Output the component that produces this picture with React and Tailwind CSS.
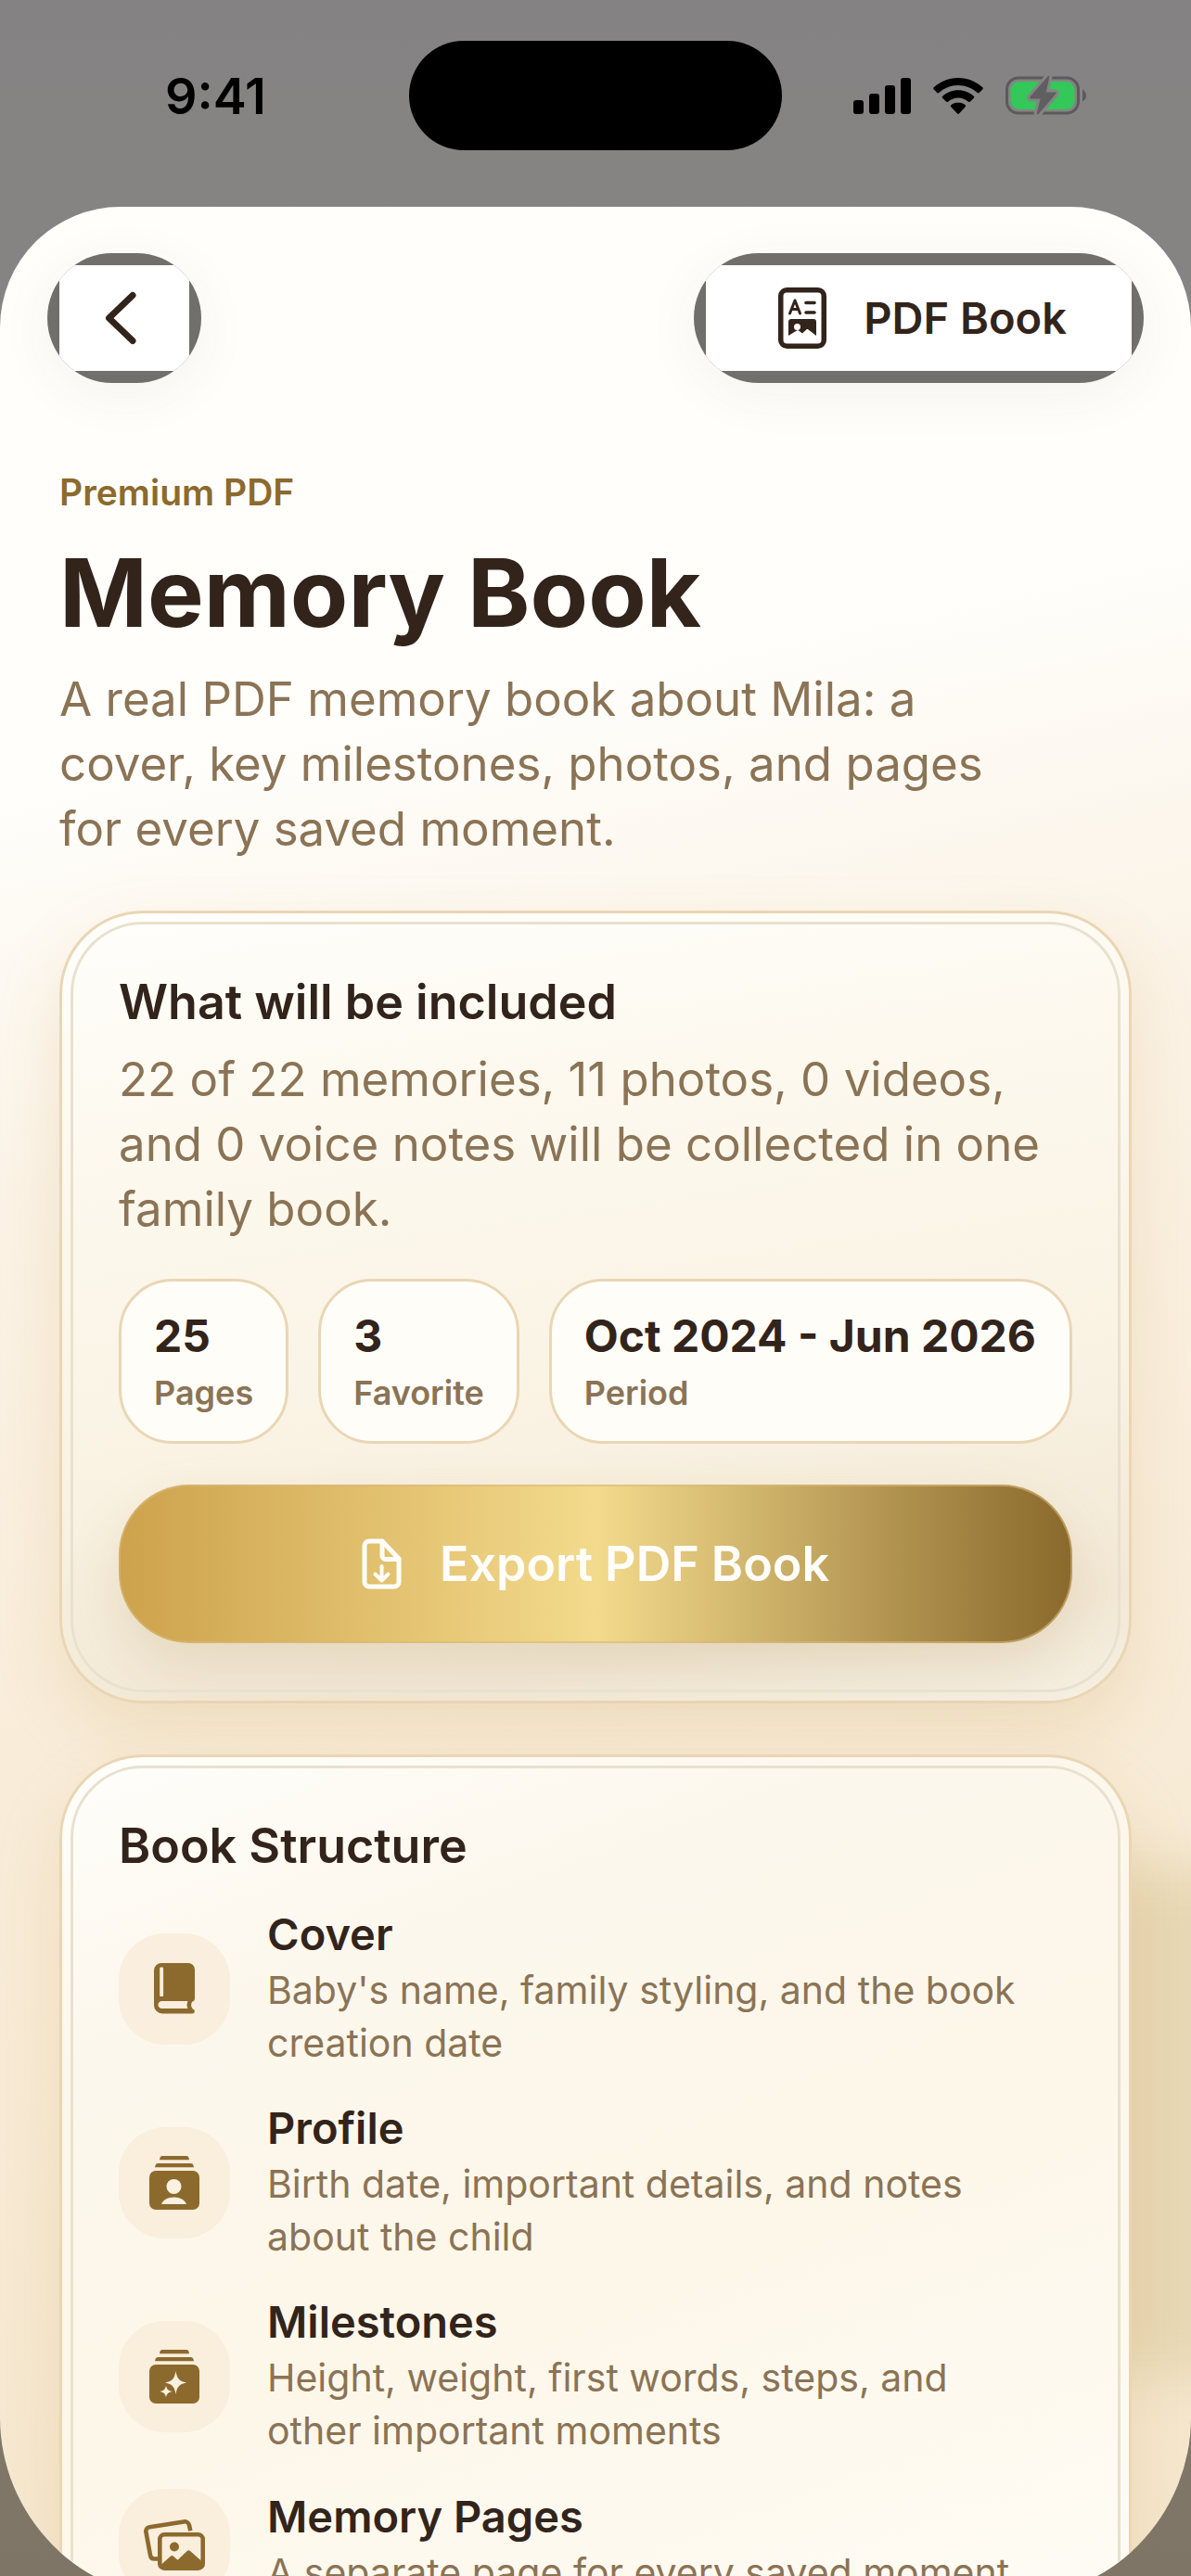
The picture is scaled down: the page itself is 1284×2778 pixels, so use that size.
import React from 'react';

const SignalIcon = () => (
  <svg width="62" height="39" viewBox="0 0 62 39" aria-hidden="true">
    <rect x="0" y="24" width="11" height="15" rx="3" />
    <rect x="17" y="17" width="11" height="22" rx="3" />
    <rect x="34" y="8" width="11" height="31" rx="3" />
    <rect x="51" y="0" width="11" height="39" rx="3" />
  </svg>
);

const WifiIcon = () => (
  <svg width="54" height="39" viewBox="0 0 54 39" aria-hidden="true">
    <path d="M27 0C16.800 0 7.600 3.900 .7 10.200c-.7.700-.7 1.400-.1 2l3.700 3.800c.6.600 1.400.6 2 0C11.800 11 19 7.900 27 7.900S42.200 11 47.700 16c.6.600 1.400.6 2 0l3.700-3.800c.6-.6.600-1.300-.1-2C46.400 3.900 37.200 0 27 0z" />
    <path d="M27 13.200c-6.500 0-12.400 2.500-16.800 6.500-.7.600-.7 1.400-.1 2l3.900 3.900c.6.600 1.300.6 2 .1 2.900-2.700 6.800-4.300 11-4.300s8.100 1.600 11 4.300c.7.500 1.400.5 2-.1l3.900-3.900c.6-.6.600-1.400-.1-2-4.400-4-10.300-6.500-16.800-6.500z" />
    <path d="M27 26.500c-2.900 0-5.500 1-7.600 2.700-.7.600-.7 1.400-.1 2l6.500 7.100c.7.800 1.700.8 2.400 0l6.500-7.100c.6-.6.600-1.400-.1-2-2.100-1.700-4.700-2.700-7.600-2.700z" />
  </svg>
);

const BatteryIcon = () => (
  <svg width="88" height="42" viewBox="0 0 88 42" aria-hidden="true">
    <rect x="1.500" y="2" width="77" height="38" rx="12.500" fill="none" stroke="#5b5a5c" strokeWidth="3" />
    <path d="M83 14.500c2.600 1.200 4 3.700 4 6.500s-1.400 5.300-4 6.500z" fill="#5b5a5c" />
    <rect x="5.500" y="6" width="69" height="30" rx="9" fill="#34c759" />
    <path
      d="M45.500 .5L26.500 22.500c-.8 1-.4 1.900.8 1.900h10.300l-3.900 15.600c-.4 1.700.8 2.200 1.900 1L54.200 19.300c.8-1 .4-1.900-.8-1.900H43.700L47.300 1.500c.4-1.700-.7-2.200-1.800-1z"
      fill="#5f5e60"
      stroke="#868482"
      strokeWidth="6"
      paintOrder="stroke"
    />
  </svg>
);

const ChevronIcon = () => (
  <svg width="34" height="58" viewBox="0 0 34 58" fill="none" stroke="#32241b" strokeWidth="7" strokeLinecap="round" strokeLinejoin="round" aria-hidden="true">
    <path d="M30 4.500L4.500 29 30 53.500" />
  </svg>
);

const DocImageIcon = () => (
  <svg width="52" height="66" viewBox="0 0 52 66" fill="none" stroke="#32241b" aria-hidden="true">
    <rect x="2.750" y="2.750" width="46.500" height="60.500" rx="6.500" strokeWidth="5.500" />
    <path d="M12.500 28l5.500-14 5.500 14M14.500 23.500h7" strokeWidth="3" strokeLinecap="round" strokeLinejoin="round" />
    <path d="M30 16.500h9M30 27h9" strokeWidth="3.600" strokeLinecap="round" />
    <path
      d="M14 34h24a3 3 0 0 1 3 3v15l-8.500-6.500c-.8-.6-1.500-.6-2.200 0L26 49.500l-4-3c-.7-.5-1.300-.5-2 0L11 52V37a3 3 0 0 1 3-3zm6.500 5a3.500 3.500 0 1 0 0 7 3.500 3.500 0 0 0 0-7z"
      fill="#32241b"
      fillRule="evenodd"
      stroke="none"
    />
  </svg>
);

const DocDownIcon = () => (
  <svg width="44" height="56" viewBox="0 0 44 56" fill="none" stroke="#fffefa" strokeWidth="5" strokeLinecap="round" strokeLinejoin="round" aria-hidden="true">
    <path d="M22 3H8a5 5 0 0 0-5 5v39a5 5 0 0 0 5 5h27a5 5 0 0 0 5-5V22z" />
    <path d="M22 3v16a3.500 3.500 0 0 0 3.500 3.500H40" />
    <path d="M21.500 30v14M14.500 38.500l7 7 7-7" strokeWidth="4" />
  </svg>
);

const BookIcon = () => (
  <svg width="44" height="55" viewBox="0 0 44 55" fill="#8c6a2d" aria-hidden="true">
    <path
      fillRule="evenodd"
      d="M8 0h29a7 7 0 0 1 7 7v31c0 2-1 3.200-2.600 3.600-1.800 2.200-1.800 5.600.4 8 1.400.4 2 1.200 2 2.400 0 1.600-1 2.500-2.800 2.500H9a9 9 0 0 1-9-9V8a8 8 0 0 1 8-8zm-.5 4.500a1.300 1.300 0 0 0-1.300 1.300v29c0 .8.600 1.300 1.300 1.300h1.300c.8 0 1.300-.5 1.300-1.300v-29c0-.8-.5-1.300-1.300-1.300zM8.500 41c-2.300 0-4 1.700-4 4s1.700 4 4 4h28c-1.300-2.400-1.300-5.600 0-8z"
    />
  </svg>
);

// stacked cards shared by the profile and milestones rows
const StackIcon = ({ children }) => (
  <svg width="54" height="58" viewBox="0 0 54 58" fill="#8c6a2d" aria-hidden="true">
    <path d="M14 0h26c1.700 0 2.800 1.500 3 4.300H11C11.200 1.500 12.300 0 14 0z" />
    <path d="M9.500 8h35c2 0 3.200 1.500 3.500 4.300H6C6.300 9.500 7.500 8 9.500 8z" />
    <rect x="0" y="16" width="54" height="42" rx="7" />
    {children}
  </svg>
);

const ProfileIcon = () => (
  <StackIcon>
    <g fill="#fbf1e0">
      <circle cx="26.500" cy="33" r="8" />
      <path d="M13 52c1.500-4.500 7-7.500 13.500-7.500S38.500 47.500 40 52z" />
    </g>
  </StackIcon>
);

const MilestoneIcon = () => (
  <StackIcon>
    <g fill="#fbf1e0">
      <path d="M28.500 23c1.300 8 3.500 10.800 11.500 12.500-8 1.700-10.200 4.500-11.500 12.500-1.300-8-3.500-10.800-11.500-12.500 8-1.700 10.200-4.500 11.500-12.500z" />
      <path d="M18 38.500c.8 4 2 5.500 6.500 6.500-4.500 1-5.700 2.500-6.500 6.500-.8-4-2-5.500-6.500-6.500 4.500-1 5.700-2.500 6.500-6.500z" />
    </g>
  </StackIcon>
);

const PhotosIcon = () => (
  <svg width="66" height="55" viewBox="0 0 66 55" fill="none" stroke="#8c6a2d" aria-hidden="true">
    <path d="M15 42.500h-3.500a4.500 4.500 0 0 1-4.400-3.700L2.400 13.500a4.500 4.500 0 0 1 3.900-5.300L43 2.500a5 5 0 0 1 6 3.700l1.300 6" strokeWidth="4.600" />
    <rect x="17.300" y="16.300" width="46.400" height="36.400" rx="5" strokeWidth="4.600" />
    <path d="M19 48.500l9.800-8.800c1-.9 2.200-.9 3.200 0l4.500 4 10.300-9.700c1-.9 2.200-.9 3.200 0L63 45.500V49a4 4 0 0 1-4 4H23a4 4 0 0 1-4-4z" fill="#8c6a2d" stroke="none" />
    <circle cx="33" cy="29.500" r="5" fill="#8c6a2d" stroke="none" />
  </svg>
);

const stats = [
  { value: '25', label: 'Pages' },
  { value: '3', label: 'Favorite' },
  { value: 'Oct 2024 - Jun 2026', label: 'Period' },
];

const sections = [
  { title: 'Cover', text: "Baby's name, family styling, and the book creation date", icon: BookIcon },
  { title: 'Profile', text: 'Birth date, important details, and notes about the child', icon: ProfileIcon },
  { title: 'Milestones', text: 'Height, weight, first words, steps, and other important moments', icon: MilestoneIcon },
  { title: 'Memory Pages', text: 'A separate page for every saved moment', icon: PhotosIcon },
];

const StatusBar = () => (
  <div className="grid h-[223px] shrink-0 grid-cols-[1fr_auto_1fr] items-start pt-11 text-black">
    <div className="flex h-[118px] items-center pl-[178px] text-[54px] font-semibold">9:41</div>
    <div className="h-[118px] w-[402px] rounded-full bg-black" />
    <div className="flex h-[118px] items-center justify-end gap-6 pr-28">
      <SignalIcon />
      <WifiIcon />
      <BatteryIcon />
    </div>
  </div>
);

const PillButton = ({ label, children }) => (
  <button type="button" aria-label={label} className="h-[140px] overflow-hidden rounded-full bg-[#706f6b] p-[13px] shadow-[0_12px_60px_rgba(80,70,60,0.06)]">
    <span className="flex h-full items-center bg-white">{children}</span>
  </button>
);

const Card = ({ shade, children }) => (
  <section className={`rounded-[90px] border-3 border-[#ead6b4] ${shade} px-[61px] pt-16 pb-[62px] shadow-[0_30px_70px_rgba(190,140,60,0.17)] outline-3 outline-offset-[-15px] outline-[#e8e1cf]`}>
    {children}
  </section>
);

const App = () => {
  return (
    <div className="flex h-screen flex-col overflow-hidden bg-[linear-gradient(#858284,#868482_8%,#868482_50%,#7e7566)] font-['Inter','Liberation_Sans',sans-serif] text-[#32241b]">
      <StatusBar />
      <main className="relative -mb-6 min-h-0 flex-1 overflow-hidden rounded-t-[130px] rounded-b-[195px] bg-[linear-gradient(168deg,#fffefb_0%,#fffefb_22%,#fbf3e6_38%,#f9edda_58%,#f5e6cc_100%)]">
        {/* soft glow behind the second card */}
        <div className="absolute top-[1790px] -right-40 h-[550px] w-[520px] rounded-[120px] bg-[#e8d8b5] blur-[28px]" />
        <div className="relative">
          <header className="flex justify-between px-[51px] pt-[50px]">
            <PillButton label="Back">
              <span className="flex w-[140px] justify-center pr-2"><ChevronIcon /></span>
            </PillButton>
            <PillButton>
              <span className="flex items-center gap-10 pr-[70px] pl-[78px] text-[47px] font-semibold">
                <DocImageIcon />
                PDF Book
              </span>
            </PillButton>
          </header>

          <div className="px-16 pt-[94px]">
            <p className="text-[39px] leading-[48px] font-semibold text-[#8c6a2d]">Premium PDF</p>
            <h1 className="mt-6 text-[102px] leading-[120px] font-bold">Memory Book</h1>
            <p className="mt-5 max-w-[1040px] text-[51px] leading-[70px] text-[#8b7355]">
              A real PDF memory book about Mila: a cover, key milestones, photos, and pages for every saved moment.
            </p>

            <div className="mt-[53px] flex flex-col gap-[55px]">
              <Card shade="bg-[linear-gradient(172deg,#fffefb_0%,#fcf8ed_30%,#faf3e4_60%,#f2e8d5_88%,#f6f0e3_100%)]">
                <h2 className="text-[52px] leading-[64px] font-semibold">What will be included</h2>
                <p className="mt-4 text-[51px] leading-[70px] text-[#8b7355]">
                  22 of 22 memories, 11 photos, 0 videos, and 0 voice notes will be collected in one family book.
                </p>
                <div className="mt-10 flex gap-8">
                  {stats.map(stat => (
                    <div key={stat.label} className="rounded-[58px] border-3 border-[#ead6b4] bg-[#fffdf8] px-[35px] py-[30px] last:flex-1">
                      <div className="text-[48px] leading-[58px] font-bold whitespace-nowrap">{stat.value}</div>
                      <div className="mt-2.5 text-[36px] leading-[44px] font-semibold text-[#8b7355]">{stat.label}</div>
                    </div>
                  ))}
                </div>
                <button type="button" className="mt-11 flex h-[171px] w-full items-center justify-center gap-10 rounded-[76px] border-2 border-[#d9b878]/60 bg-[linear-gradient(90deg,#cda24c,#f3da8c_50%,#8a692c)] bg-origin-border text-[52px] font-semibold text-[#fffefa] shadow-[0_24px_60px_rgba(150,110,40,0.15)]">
                  <DocDownIcon />
                  Export PDF Book
                </button>
              </Card>

              <Card shade="bg-[linear-gradient(160deg,#fffefb_0%,#fcf7ec_25%,#fdf7e9_55%,#fefcf6_100%)]">
                <h2 className="text-[52px] leading-[64px] font-semibold">Book Structure</h2>
                <ul className="mt-[34px] flex flex-col gap-[34px]">
                  {sections.map(({ title, text, icon: Icon }) => (
                    <li key={title} className="flex items-center gap-10">
                      <span className="flex size-[120px] shrink-0 items-center justify-center rounded-[50px] bg-[#f9ebda]/80">
                        <Icon />
                      </span>
                      <div className="max-w-[830px]">
                        <h3 className="text-[47px] leading-[57px] font-semibold">{title}</h3>
                        <p className="mt-1 text-[41px] leading-[57px] text-[#8b7355]">{text}</p>
                      </div>
                    </li>
                  ))}
                </ul>
              </Card>
            </div>
          </div>
        </div>
      </main>
    </div>
  );
};
export default App;
